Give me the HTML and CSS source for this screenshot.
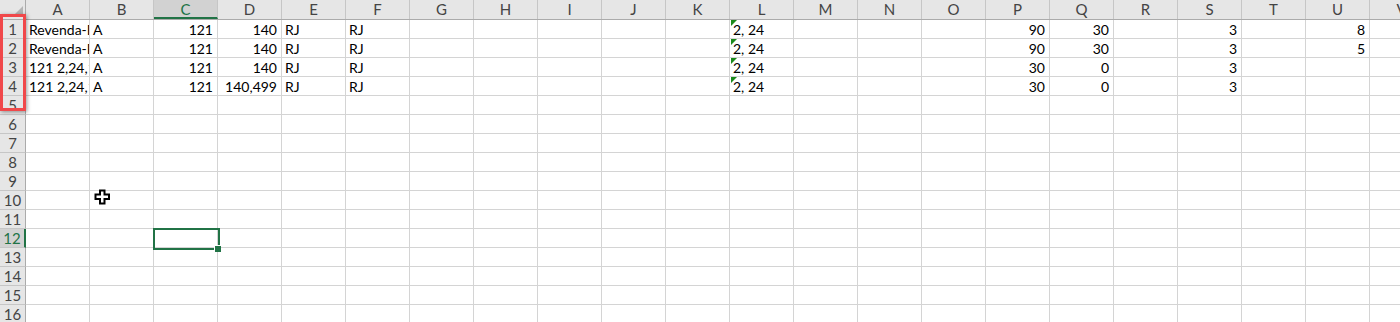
FILE: index.html
```
<!DOCTYPE html>
<html lang="pt-BR">
<head>
  <meta charset="UTF-8" />
  <title>Planilha</title>
  <link rel="stylesheet" href="styles.css">
</head>
<body>
  <div class="sheet">
    <div class="row head">
      <div class="corner"></div>
      <div class="ch">A</div><div class="ch">B</div><div class="ch on">C</div><div class="ch">D</div>
      <div class="ch">E</div><div class="ch">F</div><div class="ch">G</div><div class="ch">H</div>
      <div class="ch">I</div><div class="ch">J</div><div class="ch">K</div><div class="ch">L</div>
      <div class="ch">M</div><div class="ch">N</div><div class="ch">O</div><div class="ch">P</div>
      <div class="ch">Q</div><div class="ch">R</div><div class="ch">S</div><div class="ch">T</div>
      <div class="ch">U</div><div class="ch">V</div>
    </div>

    <div class="body">
      <div class="row">
        <div class="rh">1</div>
        <div class="t">Revenda-PF</div><div class="t">A</div><div class="n">121</div><div class="n">140</div>
        <div class="t">RJ</div><div class="t">RJ</div><div></div><div></div><div></div><div></div><div></div>
        <div class="t flag">2, 24</div><div></div><div></div><div></div><div class="n">90</div>
        <div class="n">30</div><div></div><div class="n">3</div><div></div><div class="n">8</div><div></div>
      </div>
      <div class="row">
        <div class="rh">2</div>
        <div class="t">Revenda-PF</div><div class="t">A</div><div class="n">121</div><div class="n">140</div>
        <div class="t">RJ</div><div class="t">RJ</div><div></div><div></div><div></div><div></div><div></div>
        <div class="t flag">2, 24</div><div></div><div></div><div></div><div class="n">90</div>
        <div class="n">30</div><div></div><div class="n">3</div><div></div><div class="n">5</div><div></div>
      </div>
      <div class="row">
        <div class="rh">3</div>
        <div class="t">121 2,24,120</div><div class="t">A</div><div class="n">121</div><div class="n">140</div>
        <div class="t">RJ</div><div class="t">RJ</div><div></div><div></div><div></div><div></div><div></div>
        <div class="t flag">2, 24</div><div></div><div></div><div></div><div class="n">30</div>
        <div class="n">0</div><div></div><div class="n">3</div><div></div><div></div><div></div>
      </div>
      <div class="row">
        <div class="rh">4</div>
        <div class="t">121 2,24,120</div><div class="t">A</div><div class="n">121</div><div class="n">140,499</div>
        <div class="t">RJ</div><div class="t">RJ</div><div></div><div></div><div></div><div></div><div></div>
        <div class="t flag">2, 24</div><div></div><div></div><div></div><div class="n">30</div>
        <div class="n">0</div><div></div><div class="n">3</div><div></div><div></div><div></div>
      </div>
      <div class="row"><div class="rh">5</div></div>
      <div class="row"><div class="rh">6</div></div>
      <div class="row"><div class="rh">7</div></div>
      <div class="row"><div class="rh">8</div></div>
      <div class="row"><div class="rh">9</div></div>
      <div class="row"><div class="rh">10</div></div>
      <div class="row"><div class="rh">11</div></div>
      <div class="row">
        <div class="rh on">12</div>
        <div></div><div></div><div class="sel"></div>
      </div>
      <div class="row"><div class="rh">13</div></div>
      <div class="row"><div class="rh">14</div></div>
      <div class="row"><div class="rh">15</div></div>
      <div class="row"><div class="rh">16</div></div>
    </div>

    <div class="mark"></div>
    <svg class="cursor" width="17" height="16" viewBox="0 0 17 16">
      <path d="M6 1.5h4.5v4h4.5v4.5h-4.5v4.5h-4.5v-4.5h-4.5v-4.5h4.5z" fill="#fff" stroke="#000" stroke-width="2" stroke-linejoin="miter"/>
    </svg>
  </div>
</body>
</html>
```

FILE: styles.css
```
body {
  margin: 0;
  background: #fff;
  font-family: Lato, "Liberation Sans", sans-serif;
  font-size: 14px;
  color: #000;
  overflow: hidden;
}
.sheet {
  position: relative;
  width: 1400px;
  height: 322px;
  overflow: hidden;
}
.row {
  display: grid;
  grid-template-columns: 26px repeat(22, 64px);
  height: 19px;
}
.row > div {
  box-sizing: border-box;
  overflow: hidden;
  white-space: nowrap;
  line-height: 19px;
}

/* column headers */
.head {
  height: 20px;
  background: #e6e6e6;
  border-bottom: 1px solid #ababab;
  box-sizing: border-box;
}
.head > div {
  line-height: 19px;
}
.corner {
  position: relative;
  border-right: 1px solid #ababab;
}
.corner::after {
  content: "";
  position: absolute;
  right: 2px;
  bottom: 2px;
  border-left: 11px solid transparent;
  border-bottom: 11px solid #b4b4b4;
}
.ch {
  text-align: center;
  color: #444;
  font-size: 15px;
  border-right: 1px solid #c6c6c6;
}
.ch.on {
  background: #d2d2d2;
  color: #217346;
  border-bottom: 2px solid #217346;
}

/* cell area with gridlines */
.body {
  background-image:
    repeating-linear-gradient(to right, transparent 0 63px, #d4d4d4 63px 64px),
    repeating-linear-gradient(to bottom, transparent 0 18px, #d4d4d4 18px 19px);
  background-position: 26px 0, 0 0;
}
.rh {
  background: #e6e6e6;
  color: #444;
  font-size: 15px;
  text-align: center;
  border-right: 1px solid #ababab;
  border-bottom: 1px solid #c6c6c6;
}
.rh.on {
  background: #d2d2d2;
  color: #217346;
  border-right: 2px solid #217346;
}
.t {
  padding-left: 3px;
  width: 63px;
}
.n {
  padding-right: 4px;
  text-align: right;
  width: 63px;
}
.flag {
  position: relative;
}
.flag::before {
  content: "";
  position: absolute;
  left: 1px;
  top: 0;
  border-top: 6px solid #1b8a1b;
  border-right: 6px solid transparent;
}

/* active cell */
.row > .sel {
  position: relative;
  overflow: visible;
}
.sel::before {
  content: "";
  position: absolute;
  left: -1px;
  top: -1px;
  width: 67px;
  height: 22px;
  box-sizing: border-box;
  border: 2px solid #217346;
}
.sel::after {
  content: "";
  position: absolute;
  left: 60px;
  top: 16px;
  width: 6px;
  height: 6px;
  background: #217346;
  border-left: 1px solid #fff;
  border-top: 1px solid #fff;
}

/* overlays */
.mark {
  position: absolute;
  left: 0;
  top: 14px;
  width: 26px;
  height: 97px;
  box-sizing: border-box;
  border: 3px solid #f0484a;
  box-shadow: 1px 1px 4px rgba(0,0,0,0.4);
}
.cursor {
  position: absolute;
  left: 94px;
  top: 189px;
}
```
